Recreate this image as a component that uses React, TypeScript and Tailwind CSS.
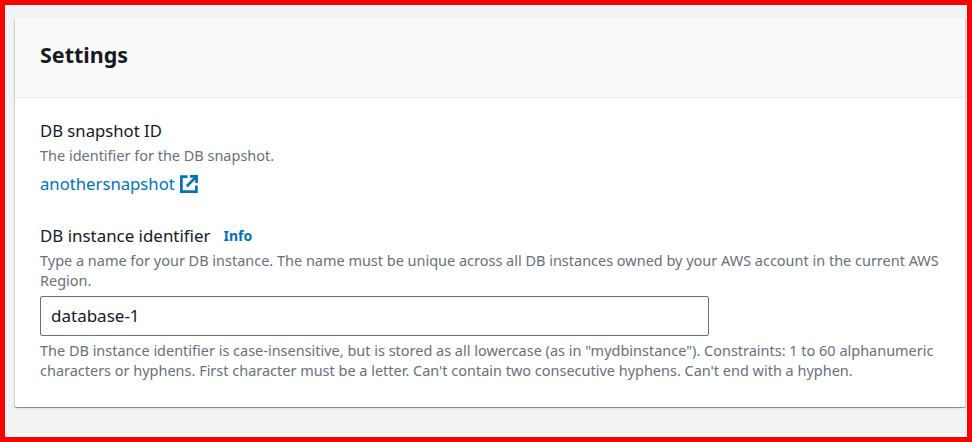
export default function App() {
  return (
    <div className="h-[442px] w-[972px] overflow-hidden border-[5px] border-[#ff0000] bg-[#f2f3f3] pt-[13px] pr-[2px] pl-[10px] font-['Noto_Sans',sans-serif] text-[14px] leading-[20px] text-[#16191f]">
      {/* Settings card */}
      <div className="h-[389px] rounded-[1px] bg-white shadow-[0_1px_1px_0_rgba(0,28,36,0.3),1px_1px_1px_0_rgba(0,28,36,0.15),-1px_1px_1px_0_rgba(0,28,36,0.15)]">
        <div className="flex h-[80px] items-center border-b border-[#eaeded] bg-[#fafafa] px-[25px]">
          <h2 className="mt-[-5px] text-[21.5px] leading-[26px] font-bold">Settings</h2>
        </div>

        <div className="px-[25px] pt-[22px]">
          <div className="text-[16.7px] leading-[22px]">DB snapshot ID</div>
          <p className="mt-[4px] text-[14.48px] leading-[20px] text-[#687078]">The identifier for the DB snapshot.</p>
          <a className="mt-[7px] flex items-center gap-[5px] text-[16.7px] leading-[22px] text-[#0073bb]">
            anothersnapshot
            <svg width="18" height="18" viewBox="0 0 18 18" fill="none" stroke="#0073bb" strokeWidth="2.7">
              <path d="M7.5 1.6H1.4v15h15v-6" />
              <path d="M6.8 11.2 15.4 2.6" />
              <path d="M10 1.4h6.6V8" />
            </svg>
          </a>

          <div className="mt-[30px] flex items-center gap-[13px]">
            <span className="text-[16.9px] leading-[22px]">DB instance identifier</span>
            <a className="text-[14px] leading-[20px] font-bold text-[#0073bb]">Info</a>
          </div>
          <p className="mt-[4px] text-[14.48px] leading-[20px] text-[#687078]">
            Type a name for your DB instance. The name must be unique across all DB instances owned by your AWS account in the current AWS Region.
          </p>
          <div className="mt-[5px] flex h-[40px] w-[669px] items-center rounded-[2px] border border-[#687078] px-[10px] text-[17px]">
            database-1
          </div>
          <p className="mt-[5px] text-[14.48px] leading-[20px] text-[#687078]">
            The DB instance identifier is case-insensitive, but is stored as all lowercase (as in "mydbinstance"). Constraints: 1 to 60 alphanumeric characters or hyphens. First character must be a letter. Can't contain two consecutive hyphens. Can't end with a hyphen.
          </p>
        </div>
      </div>

      {/* Next card, cut off by the frame */}
      <div className="mt-[25px] h-[20px] border-t border-[#eaeded] bg-[#fafafa]" />
    </div>
  );
}
